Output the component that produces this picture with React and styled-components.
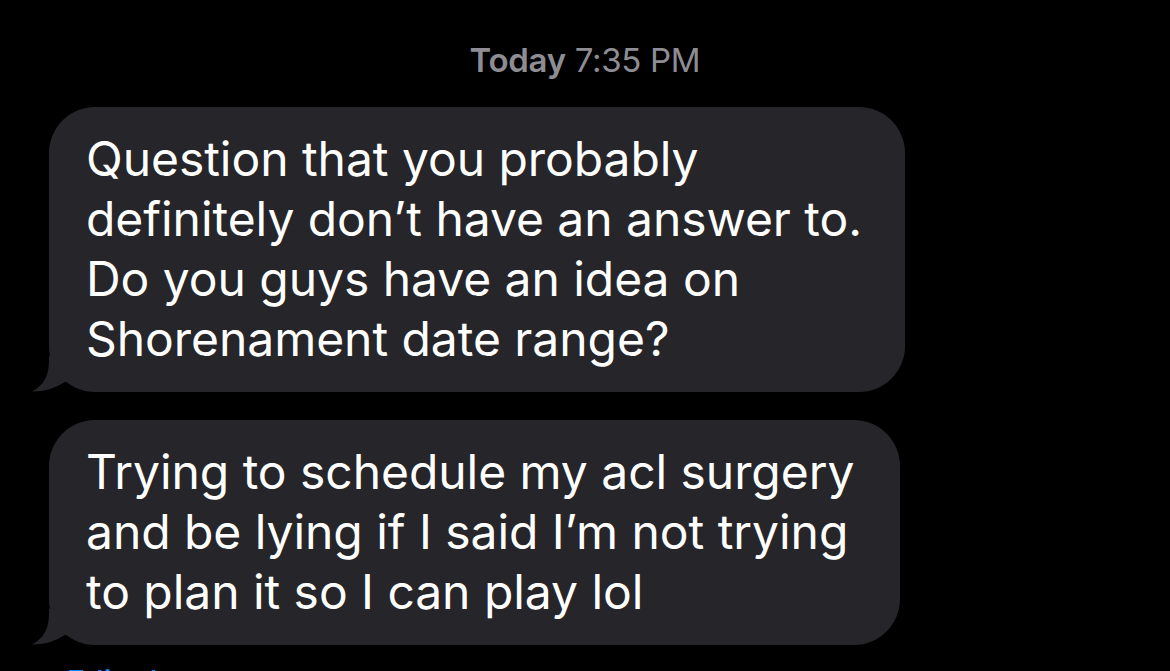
import React from 'react';
import styled, { createGlobalStyle } from 'styled-components';

const GlobalStyle = createGlobalStyle`
  html, body {
    margin: 0;
    padding: 0;
    background: #000;
    overflow: hidden;
  }
  body {
    font-family: Inter, "Noto Sans", "Liberation Sans", sans-serif;
    -webkit-font-smoothing: antialiased;
  }
`;

const Thread = styled.div`
  width: 1170px;
  height: 671px;
  background: #000;
  display: flex;
  flex-direction: column;
  align-items: flex-start;
  padding: 40px 0 0 49px;
  box-sizing: border-box;
  overflow: hidden;
`;

const Stamp = styled.div`
  align-self: center;
  margin-left: -49px;
  color: #8d8d93;
  font-size: 33px;
  line-height: 40px;
  letter-spacing: -0.3px;
  margin-bottom: 27px;

  b {
    font-weight: 600;
  }
`;

const Bubble = styled.div`
  position: relative;
  box-sizing: border-box;
  width: ${p => p.$width}px;
  background: #262529;
  color: #fff;
  border-radius: 46px;
  padding: 22px 0 23px 37px;
  font-size: 48px;
  line-height: 60px;
  letter-spacing: -0.05px;
  margin-bottom: ${p => p.$gap || 0}px;
`;

const Line = styled.span`
  display: block;
  white-space: nowrap;
`;

const Tail = styled.svg`
  position: absolute;
  left: -17px;
  bottom: 0;
  width: 40px;
  height: 36px;
`;

const Edited = styled.div`
  margin-top: 18px;
  margin-left: 18px;
  color: #0a84ff;
  font-size: 30px;
  font-weight: 500;
  line-height: 36px;
`;

const BubbleTail = () => (
  <Tail viewBox="0 0 40 36">
    <path d="M17 0 L17 4 C17 20 12 29 0 35.5 C12 36 23 32 33 26 L40 26 L40 0 Z" fill="#262529" />
  </Tail>
);

const messages = [
  {
    lines: [
      'Question that you probably',
      'definitely don\u2019t have an answer to.',
      'Do you guys have an idea on',
      'Shorenament date range?'
    ],
    width: 856,
    gap: 28
  },
  {
    lines: [
      'Trying to schedule my acl surgery',
      'and be lying if I said I\u2019m not trying',
      'to plan it so I can play lol'
    ],
    width: 851,
    gap: 0
  }
];

export default function App() {
  return (
    <>
      <GlobalStyle />
      <Thread>
        <Stamp><b>Today</b> 7:35 PM</Stamp>
        {messages.map((m, i) => (
          <Bubble key={i} $width={m.width} $gap={m.gap}>
            {m.lines.map((l, j) => <Line key={j}>{l}</Line>)}
            <BubbleTail />
          </Bubble>
        ))}
        <Edited>Edited</Edited>
      </Thread>
    </>
  );
}
